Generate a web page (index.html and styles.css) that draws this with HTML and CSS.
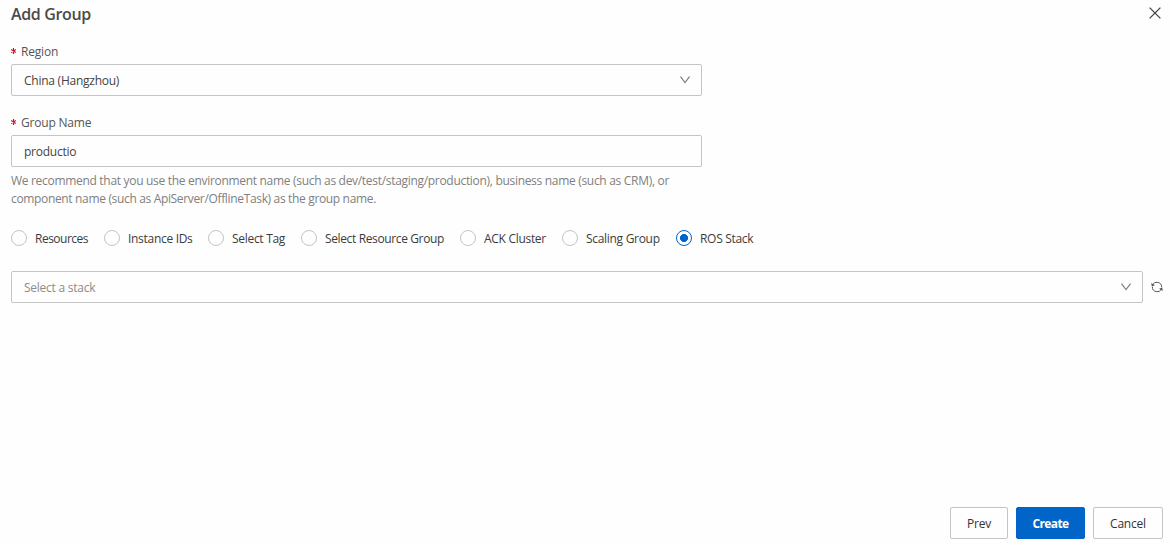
FILE: index.html
```html
<!DOCTYPE html>
<html lang="en">

<head>
    <meta charset="UTF-8">
    <meta name="viewport" content="width=device-width, initial-scale=1.0">
    <title>Add Group</title>
    <link rel="stylesheet" href="styles.css">
</head>

<body>
    <div class="dialog">
        <div class="dialog-header">
            <h1 class="dialog-title">Add Group</h1>
            <svg class="close-icon" viewBox="0 0 12 12"><path d="M0.6 0.6 L11.4 11.4 M11.4 0.6 L0.6 11.4" /></svg>
        </div>

        <div class="form">
            <div class="field">
                <div class="field-label">
                    <svg class="required" viewBox="0 0 6 6"><path d="M2.5 0 V6 M0.2 1.5 L4.8 4.5 M4.8 1.5 L0.2 4.5" /></svg>
                    <span>Region</span>
                </div>
                <div class="select">
                    <span class="value">China (Hangzhou)</span>
                    <svg class="arrow-icon" viewBox="0 0 10 8"><path d="M0.5 0.7 L5 6.6 L9.5 0.7" /></svg>
                </div>
            </div>

            <div class="field">
                <label class="field-label" for="group-name">
                    <svg class="required" viewBox="0 0 6 6"><path d="M2.5 0 V6 M0.2 1.5 L4.8 4.5 M4.8 1.5 L0.2 4.5" /></svg>
                    <span>Group Name</span>
                </label>
                <input class="text-input" type="text" id="group-name" value="productio">
                <p class="help">We recommend that you use the environment name (such as dev/test/staging/production), business name (such as CRM), or<br><span class="help-end">component name (such as ApiServer/OfflineTask) as the group name.</span></p>
            </div>
        </div>

        <div class="radio-group">
            <label class="radio resources"><input type="radio" name="type"><span>Resources</span></label>
            <label class="radio instance"><input type="radio" name="type"><span>Instance IDs</span></label>
            <label class="radio tag"><input type="radio" name="type"><span>Select Tag</span></label>
            <label class="radio resource-group"><input type="radio" name="type"><span>Select Resource Group</span></label>
            <label class="radio ack"><input type="radio" name="type"><span>ACK Cluster</span></label>
            <label class="radio scaling"><input type="radio" name="type"><span>Scaling Group</span></label>
            <label class="radio ros"><input type="radio" name="type" checked><span>ROS Stack</span></label>
        </div>

        <div class="stack-row">
            <div class="select">
                <span class="value placeholder">Select a stack</span>
                <svg class="arrow-icon" viewBox="0 0 10 8"><path d="M0.5 0.7 L5 6.6 L9.5 0.7" /></svg>
            </div>
            <svg class="refresh-icon" viewBox="0 0 12 12">
                <path d="M1.5 4.4 A4.7 4.7 0 0 1 10.6 6.2 M10.5 7.6 A4.7 4.7 0 0 1 1.4 5.8" />
                <path class="heads" d="M0.2 2 L0.8 5.6 L3.9 4.3 Z M11.8 10 L11.2 6.4 L8.1 7.7 Z" />
            </svg>
        </div>

        <div class="dialog-footer">
            <button class="btn prev">Prev</button>
            <button class="btn primary">Create</button>
            <button class="btn cancel">Cancel</button>
        </div>
    </div>
</body>

</html>
```
FILE: styles.css
```css
* {
    box-sizing: border-box;
}

body {
    margin: 0;
    background: #fefefe;
    color: #3c3c3c;
    font-family: "Open Sans", "Noto Sans", sans-serif;
    font-size: 12px;
    line-height: 18px;
    letter-spacing: -0.3px;
}

.dialog {
    display: flex;
    flex-direction: column;
    height: 544px;
    padding: 2px 9px 5px 11px;
}

.dialog-header {
    display: flex;
    justify-content: space-between;
    align-items: center;
    height: 22px;
}

.dialog-title {
    margin: 0;
    padding-top: 2px;
    font-size: 16px;
    font-weight: 600;
    letter-spacing: -0.35px;
    color: #4a4a4a;
}

.close-icon {
    width: 12px;
    height: 12px;
    margin-right: 2px;
    fill: none;
    stroke: #444;
    stroke-width: 1.3;
}

/* Form fields */
.form {
    width: 691px;
    padding-top: 18px;
}

.field {
    margin-bottom: 17px;
}

.field-label {
    display: flex;
    gap: 4px;
    height: 22px;
    line-height: 20px;
    letter-spacing: -0.2px;
    color: #555;
}

.required {
    width: 6px;
    height: 6px;
    margin-top: 6px;
    fill: none;
    stroke: #c8102e;
    stroke-width: 1.1;
}

.select,
.text-input {
    display: flex;
    align-items: center;
    justify-content: space-between;
    width: 100%;
    height: 32px;
    padding: 0 11px 0 12px;
    border: 1px solid #c4c4c4;
    border-radius: 2px;
    background: #fefefe;
    color: #444;
    font: inherit;
    letter-spacing: -0.25px;
}

.value {
    padding-top: 2px;
}

.arrow-icon {
    width: 10px;
    height: 8px;
    fill: none;
    stroke: #777;
    stroke-width: 1.1;
}

.placeholder {
    color: #8c8c8c;
}

.help {
    margin: 5px 0 0;
    color: #808080;
    letter-spacing: -0.305px;
    white-space: nowrap;
}

.help-end {
    letter-spacing: -0.34px;
}

/* Radio buttons */
.radio-group {
    display: flex;
    gap: 16px;
    margin-top: 4px;
    height: 18px;
}

.radio {
    display: flex;
    align-items: center;
    gap: 8px;
    white-space: nowrap;
}

.radio span {
    padding-top: 1px;
}

.radio input {
    appearance: none;
    flex: none;
    width: 16px;
    height: 16px;
    margin: 0;
    border: 1px solid #c4c4c4;
    border-radius: 50%;
}

.radio input:checked {
    border-color: #0064c8;
    background: radial-gradient(circle, #0064c8 3.7px, transparent 4.3px);
}

.resources { width: 77px; letter-spacing: -0.5px; }
.instance { width: 88px; }
.tag { width: 77px; }
.resource-group { width: 143px; letter-spacing: -0.37px; }
.ack { width: 86px; }
.scaling { width: 98px; }
.ros { width: 78px; }

/* Stack select with refresh */
.stack-row {
    display: flex;
    align-items: center;
    gap: 8px;
    margin-top: 24px;
}

.stack-row .select {
    width: 1132px;
}

.refresh-icon {
    width: 12px;
    height: 12px;
    margin-bottom: 1px;
    fill: none;
    stroke: #555;
    stroke-width: 1;
}

.refresh-icon .heads {
    fill: #555;
    stroke: none;
}

/* Footer buttons */
.dialog-footer {
    display: flex;
    justify-content: flex-end;
    gap: 8px;
    margin-top: auto;
}

.btn {
    height: 32px;
    padding: 1px 0 0;
    border: 1px solid #c4c4c4;
    border-radius: 2px;
    background: #fefefe;
    color: #333;
    font: inherit;
    font-weight: 500;
    letter-spacing: -0.2px;
}

.btn.prev { width: 58px; }
.btn.cancel { width: 70px; }

.btn.primary {
    width: 69px;
    border-color: #0064c8;
    background: #0064c8;
    color: #fff;
    font-weight: 700;
    letter-spacing: -0.6px;
}
```
